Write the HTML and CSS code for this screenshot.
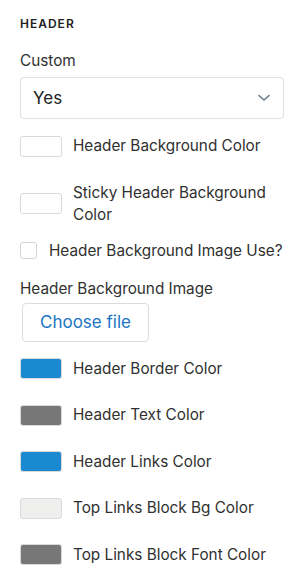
FILE: index.html
```html
<!DOCTYPE html>
<html lang="en">
<head>
    <meta charset="UTF-8">
    <meta name="viewport" content="width=device-width, initial-scale=1.0">
    <title>Header Settings</title>
    <link rel="stylesheet" href="styles.css">
</head>
<body>

    <div class="settings-panel">
        <h3 class="section-title">HEADER</h3>

        <label class="field-label" for="custom">Custom</label>
        <div class="select-wrap">
            <select id="custom" class="select-box">
                <option>Yes</option>
                <option>No</option>
            </select>
            <svg class="chevron" width="12" height="8" viewBox="0 0 12 8">
                <path d="M1 1.5 L6 6 L11 1.5" fill="none" stroke="#6b7b8c" stroke-width="1.6" stroke-linecap="round" stroke-linejoin="round"/>
            </svg>
        </div>

        <div class="color-row first">
            <span class="swatch" style="background-color: #ffffff;"></span>
            <span class="color-name">Header Background Color</span>
        </div>

        <div class="color-row">
            <span class="swatch" style="background-color: #ffffff;"></span>
            <span class="color-name">Sticky Header Background Color</span>
        </div>

        <label class="check-row">
            <span class="checkbox"></span>
            <span class="check-name">Header Background Image Use?</span>
        </label>

        <label class="field-label file-label">Header Background Image</label>
        <button class="file-button" type="button">Choose file</button>

        <div class="color-row after-file">
            <span class="swatch" style="background-color: #1a89cf;"></span>
            <span class="color-name">Header Border Color</span>
        </div>

        <div class="color-row">
            <span class="swatch" style="background-color: #777777;"></span>
            <span class="color-name">Header Text Color</span>
        </div>

        <div class="color-row">
            <span class="swatch" style="background-color: #1a89cf;"></span>
            <span class="color-name">Header Links Color</span>
        </div>

        <div class="color-row">
            <span class="swatch" style="background-color: #efefed;"></span>
            <span class="color-name">Top Links Block Bg Color</span>
        </div>

        <div class="color-row">
            <span class="swatch" style="background-color: #777777;"></span>
            <span class="color-name">Top Links Block Font Color</span>
        </div>
    </div>

</body>
</html>
```

FILE: styles.css
```css
body {
    margin: 0;
    background-color: #ffffff;
    font-family: Inter, "Open Sans", Arial, sans-serif;
    color: #303030;
}

.settings-panel {
    padding: 15.5px 22px 0 20px;
}

.section-title {
    margin: 0 0 19.5px;
    font-size: 12px;
    line-height: 16px;
    font-weight: 600;
    letter-spacing: 1px;
    color: #222;
}

.field-label {
    display: block;
    font-size: 15.3px;
    line-height: 20px;
    margin-bottom: 6px;
}

.file-label {
    margin-bottom: 4px;
}

.select-wrap {
    position: relative;
}

.select-box {
    display: block;
    width: 100%;
    height: 42px;
    padding: 0 12px;
    font-family: inherit;
    font-size: 17px;
    color: #222;
    background-color: #fff;
    border: 1px solid #dde1e6;
    border-radius: 4px;
    appearance: none;
    -webkit-appearance: none;
}

.chevron {
    position: absolute;
    right: 14px;
    top: 17px;
    pointer-events: none;
}

.color-row {
    display: flex;
    align-items: center;
    margin-top: 24.5px;
}

.color-row.first {
    margin-top: 16px;
}

.color-row.after-file {
    margin-top: 16px;
}

.swatch {
    flex: none;
    width: 40px;
    height: 19px;
    border: 1px solid #d9d9d9;
    border-radius: 3px;
    margin-right: 11px;
}

.color-name {
    font-size: 15.3px;
    line-height: 22px;
}

.check-row {
    display: flex;
    align-items: center;
    margin-top: 14px;
    margin-bottom: 17px;
}

.checkbox {
    flex: none;
    width: 15px;
    height: 15px;
    border: 1px solid #cfd6de;
    border-radius: 3px;
    margin-right: 12px;
}

.check-name {
    font-size: 15.3px;
    line-height: 22px;
}

.file-button {
    display: block;
    margin-left: 2px;
    width: 127px;
    height: 39px;
    font-family: inherit;
    font-size: 17px;
    color: #1a75c4;
    background-color: #fff;
    border: 1px solid #dcdcdc;
    border-radius: 4px;
}
```
